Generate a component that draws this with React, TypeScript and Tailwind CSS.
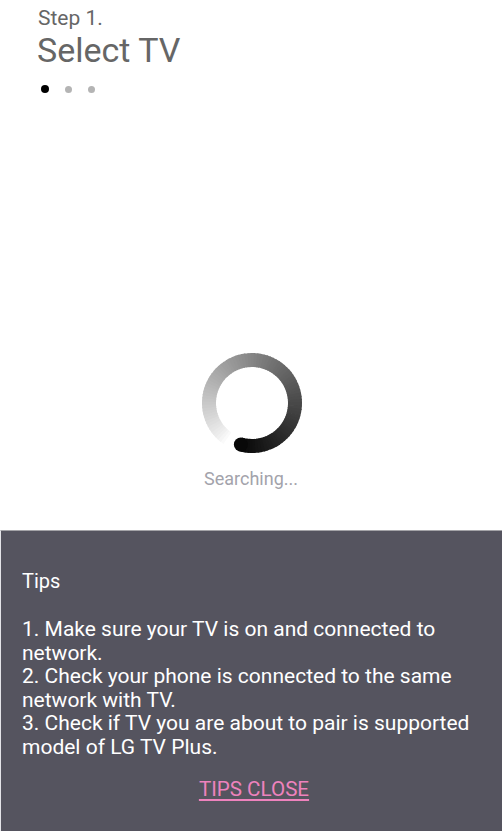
import React from 'react'

const tips = [
  '1. Make sure your TV is on and connected to network.',
  '2. Check your phone is connected to the same network with TV.',
  '3. Check if TV you are about to pair is supported model of LG TV Plus.',
]

function Spinner() {
  // ring drawn as small arc segments, fading from light at the tail to black at the head
  const cx = 51
  const cy = 51
  const r = 43
  const start = 215
  const sweep = 340
  const n = 90
  const segs = []
  for (let i = 0; i < n; i++) {
    const a0 = ((start + (sweep * i) / n - 90) * Math.PI) / 180
    const a1 = ((start + (sweep * (i + 1.3)) / n - 90) * Math.PI) / 180
    const t = i / (n - 1)
    const g = Math.round(250 - 242 * Math.pow(t, 0.85))
    segs.push(
      <path
        key={i}
        d={`M ${cx + r * Math.cos(a0)} ${cy + r * Math.sin(a0)} A ${r} ${r} 0 0 1 ${cx + r * Math.cos(a1)} ${cy + r * Math.sin(a1)}`}
        stroke={`rgb(${g},${g},${g})`}
        strokeWidth={14}
        fill="none"
      />
    )
  }
  const ae = ((start + sweep - 90) * Math.PI) / 180
  return (
    <svg width="102" height="102" viewBox="0 0 102 102">
      {segs}
      <circle cx={cx + r * Math.cos(ae)} cy={cy + r * Math.sin(ae)} r={7} fill="rgb(8,8,8)" />
    </svg>
  )
}

export default function App() {
  return (
    <div className="w-[502px] h-[831px] bg-white flex flex-col overflow-hidden" style={{ fontFamily: 'Roboto, "Noto Sans", sans-serif' }}>
      <div className="pl-[38px] pt-[5px]">
        <div className="text-[21px] leading-[27px] text-[#666666]">Step 1.</div>
        <div className="text-[34px] leading-[36px] text-[#666666] -ml-[1px]">Select TV</div>
        <div className="flex items-center gap-[16px] mt-[17px] ml-[3px]">
          <span className="w-[8px] h-[8px] rounded-full bg-black" />
          <span className="w-[7px] h-[7px] rounded-full bg-[#b4b4b4]" />
          <span className="w-[7px] h-[7px] rounded-full bg-[#b4b4b4]" />
        </div>
      </div>

      <div className="flex-1 flex flex-col items-center justify-end pb-[40px]">
        <div className="ml-[1px]">
          <Spinner />
        </div>
        <div className="text-[18px] leading-[22px] text-[#a3a3ab] mt-[14px]">Searching...</div>
      </div>

      <div className="h-[301px] bg-[#55545f] border-t border-[#a4a4a8] border-l border-l-[#e4e4e8] pl-[21px] pr-[16px] pt-[38px]">
        <div className="text-[20px] leading-[25px] text-white">Tips</div>
        <div className="mt-[24px] text-[21px] leading-[23.5px] text-white">
          {tips.map(t => (
            <div key={t}>{t}</div>
          ))}
        </div>
        <div className="mt-[18px] text-center text-[20.6px] leading-[25px] text-[#ee82bd] underline underline-offset-[3px]">
          TIPS CLOSE
        </div>
      </div>
    </div>
  )
}
